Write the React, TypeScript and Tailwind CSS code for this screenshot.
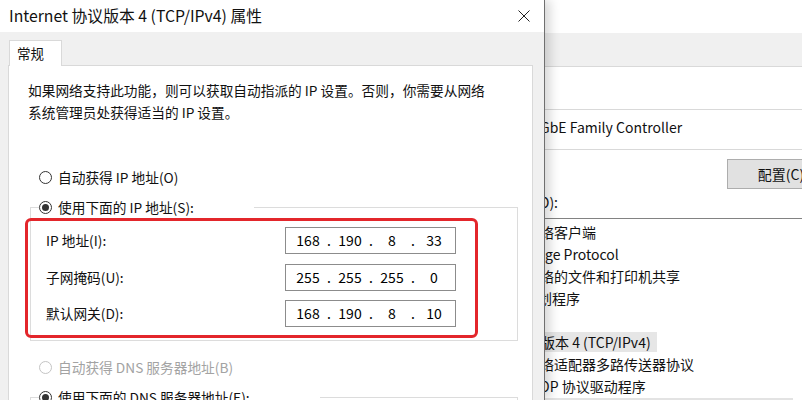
const font = "font-['Noto_Sans_CJK_SC','Microsoft_YaHei',sans-serif]";

type Item = { t: string; o: string; sel?: boolean };

const items: Item[] = [
  { t: '络客户端', o: 'ml-[-5px]' },
  { t: 'ge Protocol', o: 'ml-[0px]' },
  { t: '络的文件和打印机共享', o: 'ml-[-5px]' },
  { t: '划程序', o: 'ml-[-7px]' },
  { t: '', o: 'ml-0' },
  { t: '版本 4 (TCP/IPv4)', o: 'ml-[-4px]', sel: true },
  { t: '络适配器多路传送器协议', o: 'ml-[-5px]' },
  { t: 'DP 协议驱动程序', o: 'ml-[-5px]' },
];

const Radio = ({ checked, disabled }: { checked?: boolean; disabled?: boolean }) => (
  <span
    className={`w-[13px] h-[13px] rounded-full border bg-white flex items-center justify-center shrink-0 ${
      disabled ? 'border-[#c4c4c4]' : 'border-[#333333]'
    }`}
  >
    {checked && <span className="w-[7px] h-[7px] rounded-full bg-[#333333]" />}
  </span>
);

const IpBox = ({ parts }: { parts: string[] }) => (
  <div className="w-[171px] h-[27px] border border-[#8c8c8c] bg-white flex items-center pl-[4px] text-[14px] text-black">
    {parts.map((p, i) => (
      <div key={i} className="flex items-center">
        <span className="w-[36px] text-center">{p}</span>
        {i < 3 && <span className="w-[6px] text-center">.</span>}
      </div>
    ))}
  </div>
);

const rows = [
  { label: 'IP 地址(I):', parts: ['168', '190', '8', '33'] },
  { label: '子网掩码(U):', parts: ['255', '255', '255', '0'] },
  { label: '默认网关(D):', parts: ['168', '190', '8', '10'] },
];

export default function App() {
  return (
    <div className={`w-[802px] h-[400px] overflow-hidden bg-white flex text-[#111] ${font}`}>
      {/* front dialog */}
      <div className="relative z-10 w-[545px] h-[400px] shrink-0 bg-[#f0f0f0] border-r border-[#6f6f6f] shadow-[5px_0_10px_rgba(0,0,0,0.16)] flex flex-col">
        <div className="h-[32px] shrink-0 bg-white flex items-center justify-between pl-[9px] pr-[14px]">
          <span className="text-[15.8px] leading-none">Internet 协议版本 4 (TCP/IPv4) 属性</span>
          <svg width="12" height="12" viewBox="0 0 12 12" className="text-[#222]">
            <path d="M0.5 0.5 L11.5 11.5 M11.5 0.5 L0.5 11.5" stroke="currentColor" strokeWidth="1" />
          </svg>
        </div>

        <div className="pt-[8px] pl-[9px]">
          <div className="relative z-[1] -mb-px w-[53px] h-[26px] bg-white border border-b-0 border-[#d9d9d9] flex items-center pl-[7px] text-[13.5px]">
            常规
          </div>
        </div>

        <div className="relative ml-[8px] w-[525px] flex-1 bg-white border border-[#d9d9d9] text-[13.7px]">
          <p className="pt-[13px] pl-[19px] leading-[22px]">
            如果网络支持此功能，则可以获取自动指派的 IP 设置。否则，你需要从网络
            <br />
            系统管理员处获得适当的 IP 设置。
          </p>

          <div className="mt-[44px] ml-[30px] h-[20px] flex items-center gap-[6px]">
            <Radio />
            <span>自动获得 IP 地址(O)</span>
          </div>

          <fieldset className="mt-[10px] ml-[21px] w-[488px] border border-[#dcdcdc]">
            <legend className="ml-[8px] pr-[60px]">
              <span className="h-[20px] flex items-center gap-[6px]">
                <Radio checked />
                <span>使用下面的 IP 地址(S):</span>
              </span>
            </legend>
            <div className="pt-[10px] pb-[13px] pl-[15px] flex flex-col gap-[9.5px]">
              {rows.map((r) => (
                <div key={r.label} className="h-[27px] flex items-center">
                  <span className="w-[239px]">{r.label}</span>
                  <IpBox parts={r.parts} />
                </div>
              ))}
            </div>
          </fieldset>

          <div className="mt-[16px] ml-[30px] h-[20px] flex items-center gap-[6px] text-[#a3a3a3]">
            <Radio disabled />
            <span>自动获得 DNS 服务器地址(B)</span>
          </div>

          <fieldset className="mt-[10px] ml-[21px] w-[488px] h-[80px] border border-[#dcdcdc]">
            <legend className="ml-[8px] pr-[70px]">
              <span className="h-[20px] flex items-center gap-[6px]">
                <Radio checked />
                <span>使用下面的 DNS 服务器地址(E):</span>
              </span>
            </legend>
          </fieldset>

          {/* red annotation */}
          <div className="absolute left-[16px] top-[152px] w-[453px] h-[120px] border-[3px] border-[#e3262b] rounded-[6px]" />
        </div>
      </div>

      {/* window behind */}
      <div className="flex-1 h-[400px] overflow-hidden flex flex-col text-[14px] whitespace-nowrap">
        <div className="h-[33px] shrink-0" />
        <div className="h-[34px] shrink-0 bg-[#f0f0f0] border-b border-[#d9d9d9]" />
        <div className="h-[43px] shrink-0 border-b border-[#d9d9d9]" />
        <div className="h-[40px] shrink-0 border-b border-[#d9d9d9] flex items-center pb-[4px]">
          <span className="ml-[-5px]">GbE Family Controller</span>
        </div>
        <div className="pt-[9px] pl-[182px] flex">
          <div className="w-[108px] h-[30px] shrink-0 bg-[#e1e1e1] border border-[#adadad] flex items-center justify-center">
            配置(C)
          </div>
        </div>
        <div className="mt-[3px] h-[22px] flex items-center">
          <span className="ml-[-6px]">O):</span>
        </div>
        <div className="mt-[5px] border-t border-[#828282] pt-[2px] flex flex-col">
          {items.map((it, i) => (
            <div key={i} className="h-[22px] flex items-center">
              <span className={`${it.o} pr-[6px] leading-[20px] ${it.sel ? 'bg-[#e6e6e6]' : ''}`}>{it.t}</span>
            </div>
          ))}
          <div className="mt-[1px] h-[10px] w-[248px] bg-[#e3e3e3]" />
        </div>
      </div>
    </div>
  );
}
